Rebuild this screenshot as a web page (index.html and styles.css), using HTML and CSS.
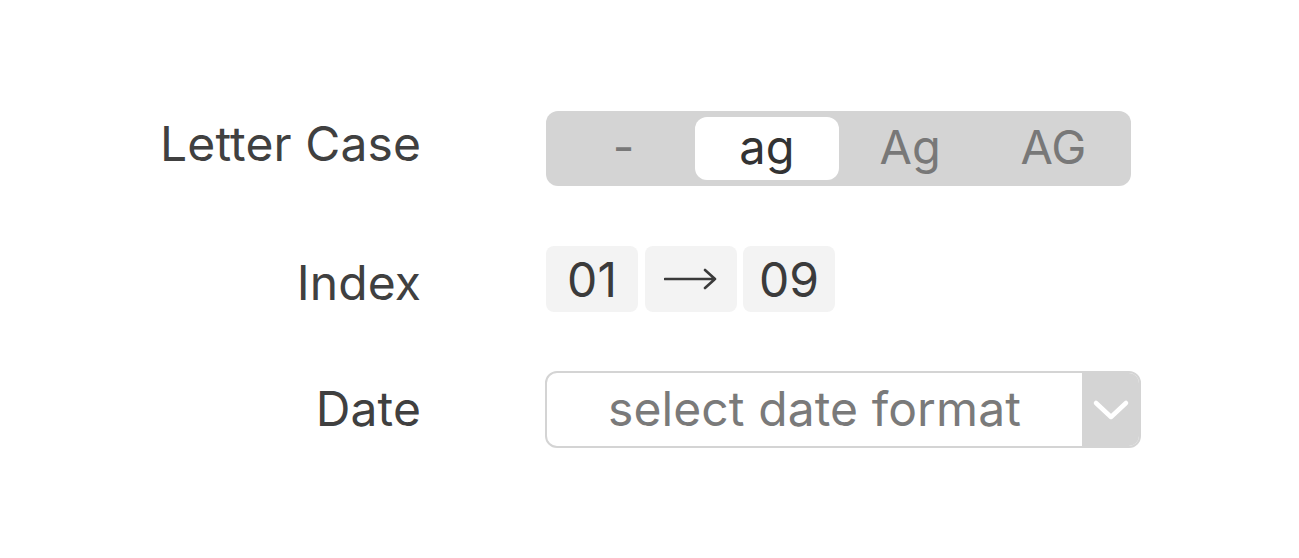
FILE: index.html
```html
<!DOCTYPE html>
<html>
<head>
<meta charset="utf-8">
<link rel="stylesheet" href="styles.css">
</head>
<body>
<div class="form">
  <div class="label row1 lc">Letter Case</div>
  <div class="seg row1">
    <div class="seg-item">-</div>
    <div class="seg-item active">ag</div>
    <div class="seg-item">Ag</div>
    <div class="seg-item">AG</div>
  </div>

  <div class="label row2 li">Index</div>
  <div class="index row2">
    <div class="idx">01</div>
    <div class="idx"><svg width="54" height="24" viewBox="0 0 54 24"><path d="M1 12 H51 M41 3 L51 12 L41 21" fill="none" stroke="#3a3a3a" stroke-width="2.6" stroke-linecap="round" stroke-linejoin="round"/></svg></div>
    <div class="idx">09</div>
  </div>

  <div class="label row3 ld">Date</div>
  <div class="select row3">
    <div class="select-text">select date format</div>
    <div class="select-btn"><svg width="38" height="24" viewBox="0 0 38 24"><path d="M4 5 L19 19 L34 5" fill="none" stroke="#ffffff" stroke-width="4.5" stroke-linecap="round" stroke-linejoin="round"/></svg></div>
  </div>
</div>
</body>
</html>
```
FILE: styles.css
```css
html, body {
  margin: 0;
  padding: 0;
  background: #ffffff;
}
body {
  font-family: Inter, "Noto Sans", sans-serif;
  color: #3b3b3b;
}
.form {
  display: grid;
  grid-template-columns: 271px auto;
  column-gap: 125px;
  padding: 111px 0 0 150px;
  align-items: center;
  justify-content: start;
}
.label {
  font-size: 48px;
  text-align: right;
  color: #404040;
  letter-spacing: 0.1px;
}
.lc { padding-bottom: 10px; }
.li { padding-top: 6px; }
.ld { padding-bottom: 2px; }
.row2 { margin-top: 60px; }
.row3 { margin-top: 59px; }
.seg {
  display: grid;
  grid-template-columns: repeat(4, 1fr);
  width: 573px;
  height: 63px;
  padding: 6px;
  background: #d4d4d4;
  border-radius: 12px;
}
.seg-item {
  display: flex;
  align-items: center;
  justify-content: center;
  font-size: 47px;
  color: #787878;
  border-radius: 12px;
  padding-bottom: 4px;
}
.seg-item.active {
  background: #ffffff;
  color: #333333;
}
.index {
  display: flex;
  gap: 7px;
}
.idx {
  width: 92px;
  height: 66px;
  background: #f3f3f3;
  border-radius: 8px;
  display: flex;
  align-items: center;
  justify-content: center;
  font-size: 48px;
  color: #3b3b3b;
}
.idx + .idx + .idx { margin-left: -1px; }
.select {
  display: flex;
  width: 592px;
  height: 73px;
  border: 2px solid #d4d4d4;
  border-radius: 12px;
  overflow: hidden;
  box-sizing: content-box;
  margin-left: -1px;
}
.select-text {
  flex: 1;
  display: flex;
  align-items: center;
  justify-content: center;
  font-size: 48px;
  color: #7a7a7a;
  letter-spacing: 0.1px;
  padding-bottom: 2px;
}
.select-btn {
  width: 57px;
  background: #d4d4d4;
  display: flex;
  align-items: center;
  justify-content: center;
}
```
